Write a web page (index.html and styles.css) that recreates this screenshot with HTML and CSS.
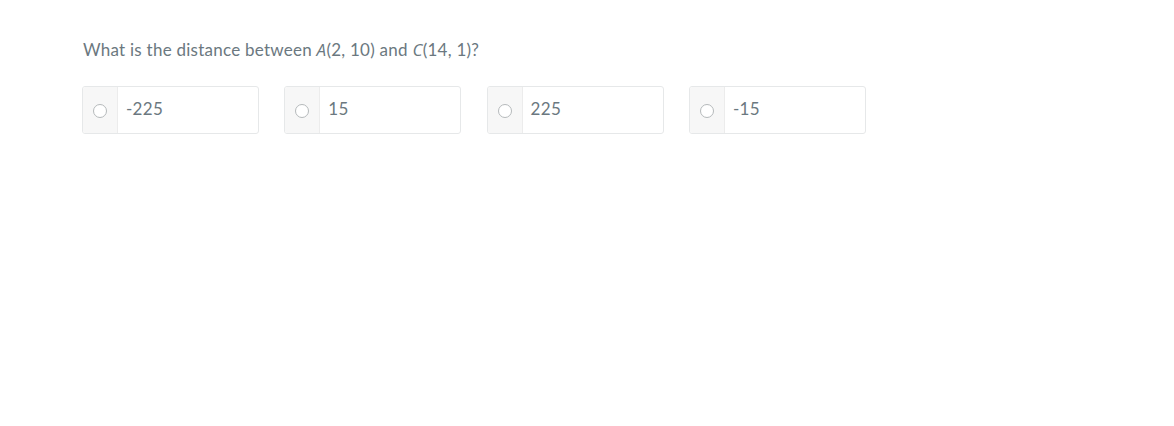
FILE: index.html
```html
<!DOCTYPE html>
<html>
<head>
<meta charset="utf-8">
<link rel="stylesheet" href="styles.css">
</head>
<body>
<div class="page">
  <p class="question">What is the distance between <i>A</i>(2, 10) and <i>C</i>(14, 1)?</p>
  <div class="choices">
    <label class="choice"><span class="radio-cell"><span class="radio"></span></span><span class="label">-225</span></label>
    <label class="choice"><span class="radio-cell"><span class="radio"></span></span><span class="label">15</span></label>
    <label class="choice"><span class="radio-cell"><span class="radio"></span></span><span class="label">225</span></label>
    <label class="choice"><span class="radio-cell"><span class="radio"></span></span><span class="label">-15</span></label>
  </div>
</div>
</body>
</html>
```
FILE: styles.css
```css
html, body { margin: 0; padding: 0; background: #fff; }
body { font-family: Lato, "Noto Sans", sans-serif; color: #6b7880; }
.page { padding: 38px 0 0 82px; }
.question { margin: 0 0 0 1px; font-size: 17px; line-height: 24px; letter-spacing: 0.25px; }
.question i { font-family: "Open Sans", Lato, sans-serif; font-style: italic; }
.choices { display: flex; gap: 25.3px; margin-top: 24px; }
.choice {
  display: flex; width: 177px; height: 48px; box-sizing: border-box;
  border: 1px solid #e6e8e9; border-radius: 3px; overflow: hidden;
}
.radio-cell {
  width: 34px; flex: none; background: #f7f7f7; border-right: 1px solid #ececec;
  display: flex; align-items: center; justify-content: center;
}
.radio {
  width: 14px; height: 14px; box-sizing: border-box; border: 1px solid #b5b9bb;
  border-radius: 50%; background: #fff; margin-top: 1px;
}
.label { padding-left: 8px; display: flex; align-items: center; font-size: 17px; letter-spacing: 0.3px; padding-bottom: 4px; }
```
